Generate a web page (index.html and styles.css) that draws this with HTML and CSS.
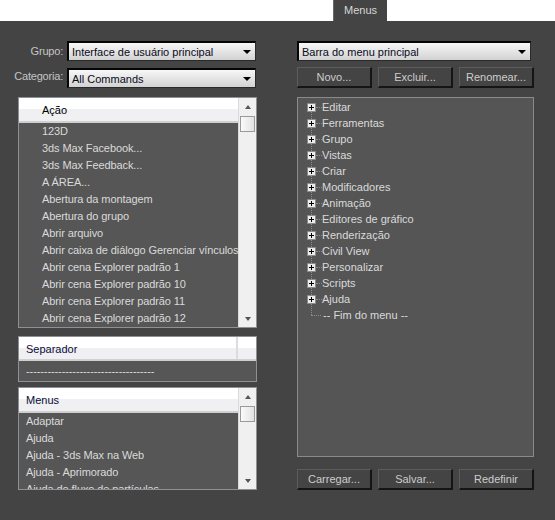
FILE: index.html
```html
<!DOCTYPE html>
<html lang="pt">
<head>
  <meta charset="UTF-8">
  <title>Personalizar interface do usuário - Menus</title>
  <link rel="stylesheet" href="styles.css">
</head>
<body>
  <div class="tabs">
    <div class="tab">Menus</div>
  </div>

  <div class="panel">
    <!-- Left: action list -->
    <div class="col-left">
      <div class="field">
        <label>Grupo:</label>
        <div class="select">Interface de usuário principal</div>
      </div>
      <div class="field">
        <label>Categoria:</label>
        <div class="select">All Commands</div>
      </div>

      <div class="list actions">
        <div class="list-body">
          <div class="list-head">Ação</div>
          <div class="row">123D</div>
          <div class="row">3ds Max Facebook...</div>
          <div class="row">3ds Max Feedback...</div>
          <div class="row">A ÁREA...</div>
          <div class="row">Abertura da montagem</div>
          <div class="row">Abertura do grupo</div>
          <div class="row">Abrir arquivo</div>
          <div class="row">Abrir caixa de diálogo Gerenciar vínculos</div>
          <div class="row">Abrir cena Explorer padrão 1</div>
          <div class="row">Abrir cena Explorer padrão 10</div>
          <div class="row">Abrir cena Explorer padrão 11</div>
          <div class="row">Abrir cena Explorer padrão 12</div>
        </div>
        <div class="scroll">
          <div class="arrow up"></div>
          <div class="thumb"></div>
          <div class="track"></div>
          <div class="arrow down"></div>
        </div>
      </div>

      <div class="list sep">
        <div class="list-head split"><span>Separador</span><span class="col-end"></span></div>
        <div class="row">------------------------------------</div>
      </div>

      <div class="list menus">
        <div class="list-body">
          <div class="list-head">Menus</div>
          <div class="row">Adaptar</div>
          <div class="row">Ajuda</div>
          <div class="row">Ajuda - 3ds Max na Web</div>
          <div class="row">Ajuda - Aprimorado</div>
          <div class="row">Ajuda do fluxo de partículas</div>
        </div>
        <div class="scroll">
          <div class="arrow up"></div>
          <div class="thumb"></div>
          <div class="track"></div>
          <div class="arrow down"></div>
        </div>
      </div>
    </div>

    <!-- Right: menu tree -->
    <div class="col-right">
      <div class="select wide">Barra do menu principal</div>
      <div class="buttons">
        <button>Novo...</button>
        <button>Excluir...</button>
        <button>Renomear...</button>
      </div>

      <div class="tree">
        <div class="node"><span class="box"></span><span class="link"></span>Editar</div>
        <div class="node"><span class="box"></span><span class="link"></span>Ferramentas</div>
        <div class="node"><span class="box"></span><span class="link"></span>Grupo</div>
        <div class="node"><span class="box"></span><span class="link"></span>Vistas</div>
        <div class="node"><span class="box"></span><span class="link"></span>Criar</div>
        <div class="node"><span class="box"></span><span class="link"></span>Modificadores</div>
        <div class="node"><span class="box"></span><span class="link"></span>Animação</div>
        <div class="node"><span class="box"></span><span class="link"></span>Editores de gráfico</div>
        <div class="node"><span class="box"></span><span class="link"></span>Renderização</div>
        <div class="node"><span class="box"></span><span class="link"></span>Civil View</div>
        <div class="node"><span class="box"></span><span class="link"></span>Personalizar</div>
        <div class="node"><span class="box"></span><span class="link"></span>Scripts</div>
        <div class="node"><span class="box"></span><span class="link"></span>Ajuda</div>
        <div class="node end"><span class="link"></span>-- Fim do menu --</div>
      </div>

      <div class="buttons bottom">
        <button>Carregar...</button>
        <button>Salvar...</button>
        <button>Redefinir</button>
      </div>
    </div>
  </div>
</body>
</html>
```

FILE: styles.css
```css
/* General */
body {
  margin: 0;
  width: 555px;
  height: 520px;
  overflow: hidden;
  background: #444444;
  color: #dadada;
  font-family: 'Liberation Sans', Arial, sans-serif;
  font-size: 11px;
}

/* Tab strip */
.tabs {
  height: 21px;
  background: #ffffff;
  display: flex;
  padding-left: 333px;
}

.tab {
  width: 54px;
  background: #444444;
  border-left: 1px solid #6a6a6a;
  box-sizing: border-box;
  color: #d6d6d6;
  text-align: center;
  line-height: 21px;
}

.panel {
  display: flex;
  gap: 40px;
  padding-top: 20px;
}

.col-left {
  width: 257px;
  display: flex;
  flex-direction: column;
}

.col-right {
  width: 237px;
  display: flex;
  flex-direction: column;
}

/* Dropdowns */
.field {
  display: flex;
  align-items: center;
  height: 20px;
}

.field + .field {
  margin-top: 7px;
}

.field label {
  width: 63px;
  margin-right: 4px;
  text-align: right;
  letter-spacing: -0.2px;
  color: #c4c4c4;
}

.field + .field label {
  margin-top: -4px;
}

.select {
  position: relative;
  width: 189px;
  height: 20px;
  box-sizing: border-box;
  padding-left: 3px;
  display: flex;
  align-items: center;
  border: 1px solid #2a2a2a;
  border-top: 2px solid #050505;
  border-left: 2px solid #050505;
  background: linear-gradient(#f7f7f7, #d2d2d2);
  color: #0a0a1a;
}

.select::after {
  content: '';
  position: absolute;
  right: 4px;
  top: 7px;
  border-left: 4px solid transparent;
  border-right: 4px solid transparent;
  border-top: 4px solid #000;
}

.select.wide {
  width: 234px;
}

/* Lists */
.list {
  margin-left: 18px;
  width: 239px;
  box-sizing: border-box;
  border: 1px solid #8d9196;
  background: #565656;
  display: flex;
  overflow: hidden;
}

.list.actions {
  margin-top: 9px;
  height: 231px;
}

.list.sep {
  margin-top: 8px;
  height: 46px;
  flex-direction: column;
}

.list.menus {
  margin-top: 5px;
  height: 103px;
}

.list-body {
  flex: 1;
  overflow: hidden;
}

.list-head {
  height: 25px;
  box-sizing: border-box;
  padding-left: 23px;
  line-height: 24px;
  background: linear-gradient(#ffffff 50%, #f0f0f2 50%);
  border-bottom: 2px solid #d0d0d0;
  color: #000;
}

.actions .row {
  padding-left: 23px;
}

.menus .list-head,
.sep .list-head {
  padding-left: 7px;
  color: #0a0a3a;
}

.sep .list-head {
  height: 24px;
  display: flex;
  justify-content: space-between;
  padding-right: 0;
}

.col-end {
  width: 18px;
  border-left: 2px solid #dcdcdc;
}

.row {
  height: 17px;
  line-height: 17px;
  padding-left: 7px;
  letter-spacing: -0.1px;
  white-space: nowrap;
}

.sep .row {
  line-height: 20px;
}

/* Scrollbar */
.scroll {
  width: 17px;
  background: #f0f0f0;
  border-left: 1px solid #dadada;
  display: flex;
  flex-direction: column;
}

.arrow {
  height: 17px;
  display: flex;
  justify-content: center;
  align-items: center;
}

.arrow::before {
  content: '';
  border-left: 3px solid transparent;
  border-right: 3px solid transparent;
}

.arrow.up::before {
  border-bottom: 4px solid #555;
}

.arrow.down::before {
  border-top: 4px solid #555;
}

.thumb {
  height: 16px;
  margin: 1px;
  box-sizing: border-box;
  border: 1px solid #9a9a9a;
  background: linear-gradient(90deg, #fafafa, #e2e2e2);
}

.track {
  flex: 1;
}

/* Buttons */
.buttons {
  display: flex;
  gap: 6px;
  margin-top: 6px;
}

.buttons.bottom {
  margin-top: 12px;
}

.buttons button {
  width: 75px;
  height: 21px;
  padding: 0;
  box-sizing: border-box;
  background: #444444;
  border: none;
  border-top: 1px solid #5c5c5c;
  border-left: 1px solid #5c5c5c;
  border-right: 2px solid #151515;
  border-bottom: 2px solid #151515;
  color: #cccccc;
  font-family: inherit;
  font-size: 11px;
}

/* Menu tree */
.tree {
  position: relative;
  margin-top: 9px;
  height: 360px;
  box-sizing: border-box;
  padding-top: 1px;
  border: 1px solid #8a8a8a;
  background: #555555;
}

.tree::before {
  content: '';
  position: absolute;
  left: 13px;
  top: 9px;
  height: 208px;
  border-left: 1px dotted #8c8c8c;
}

.node {
  position: relative;
  height: 16px;
  display: flex;
  align-items: center;
  padding-left: 9px;
  white-space: nowrap;
}

.box {
  position: relative;
  width: 9px;
  height: 9px;
  box-sizing: border-box;
  border: 1px solid #8a8a8a;
  background: #ececec;
}

.box::before,
.box::after {
  content: '';
  position: absolute;
  background: #000;
}

.box::before {
  left: 1px;
  top: 3px;
  width: 5px;
  height: 1px;
}

.box::after {
  left: 3px;
  top: 1px;
  width: 1px;
  height: 5px;
}

.link {
  width: 6px;
  margin-top: 1px;
  border-top: 1px dotted #8c8c8c;
}

.node.end {
  padding-left: 13px;
}

.node.end .link {
  width: 10px;
  margin-right: 2px;
}
```
